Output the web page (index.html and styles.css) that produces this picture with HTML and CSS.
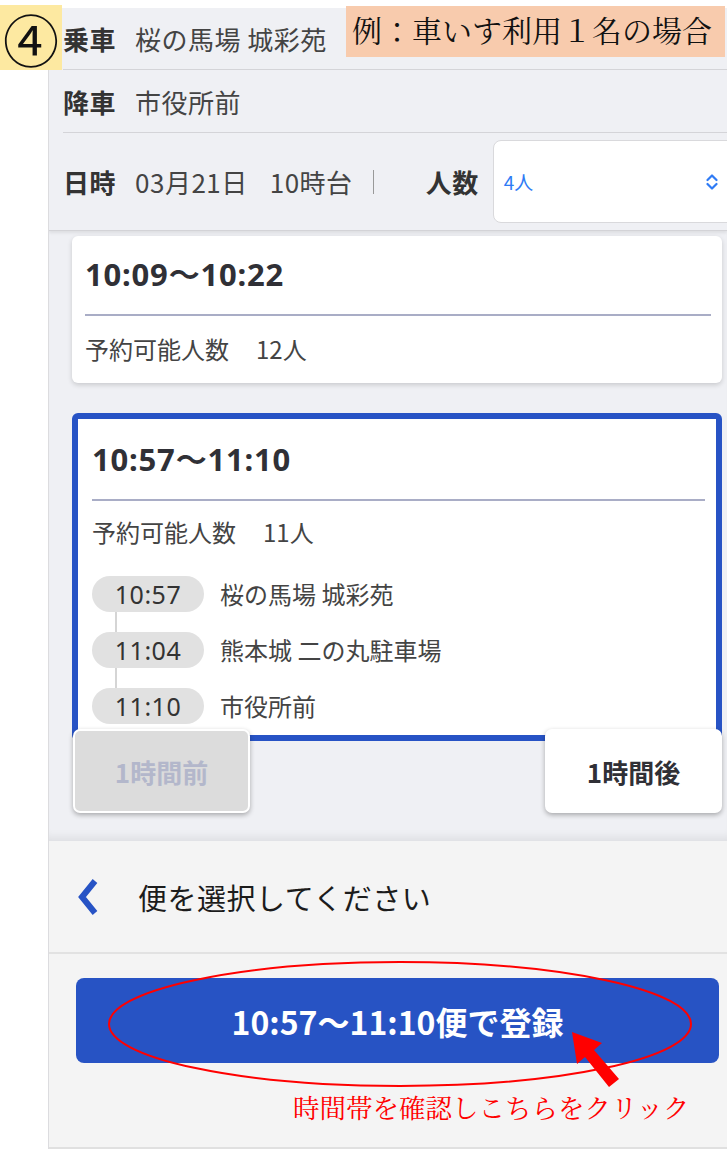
FILE: index.html
```html
<!DOCTYPE html>
<html lang="ja">
<head>
<meta charset="utf-8">
<title>便選択</title>
<link rel="stylesheet" href="styles.css">
</head>
<body>
<div class="page">
  <div class="app">
    <header class="cond">
      <div class="cond-row"><span class="cond-key">乗車</span><span class="cond-val">桜の馬場 城彩苑</span></div>
      <div class="cond-row"><span class="cond-key">降車</span><span class="cond-val">市役所前</span></div>
      <div class="cond-row cond-row-last">
        <span class="cond-key">日時</span>
        <span class="cond-val">03月21日</span>
        <span class="cond-val cond-hour">10時台</span>
        <span class="sep"></span>
        <span class="cond-key key-count">人数</span>
        <div class="select">
          <span class="select-val">4人</span>
          <svg class="select-icon" width="12" height="18" viewBox="0 0 12 18"><path d="M1.5 7 L6 2.5 L10.5 7 M1.5 11 L6 15.5 L10.5 11" fill="none" stroke="#2f7bf5" stroke-width="2.2" stroke-linecap="round" stroke-linejoin="round"/></svg>
        </div>
      </div>
    </header>

    <main class="list">
      <section class="card">
        <div class="card-head">10:09〜10:22</div>
        <div class="card-body">予約可能人数<span class="cap">12人</span></div>
      </section>

      <section class="card card-selected">
        <div class="card-head">10:57〜11:10</div>
        <div class="card-body">
          <div>予約可能人数<span class="cap">11人</span></div>
          <ul class="stops">
            <li class="stop"><span class="pill">10:57</span><span class="stop-name">桜の馬場 城彩苑</span></li>
            <li class="stop"><span class="pill">11:04</span><span class="stop-name">熊本城 二の丸駐車場</span></li>
            <li class="stop"><span class="pill">11:10</span><span class="stop-name">市役所前</span></li>
          </ul>
        </div>
      </section>

      <div class="hour-nav">
        <button class="hour-btn hour-btn-disabled">1時間前</button>
        <button class="hour-btn">1時間後</button>
      </div>
    </main>

    <nav class="titlebar">
      <svg class="back" width="26" height="40" viewBox="0 0 26 40"><path d="M20 4 L7 20 L20 36" fill="none" stroke="#2753c5" stroke-width="6" stroke-linejoin="miter"/></svg>
      <span class="title">便を選択してください</span>
    </nav>

    <footer class="submit-area">
      <button class="submit">10:57〜11:10便で登録</button>
      <p class="hint">時間帯を確認しこちらをクリック</p>
    </footer>
  </div>

  <div class="step-badge"><span class="step-num">④</span></div>
  <div class="example-label">例：車いす利用１名の場合</div>
  <svg class="annot" width="727" height="1150" viewBox="0 0 727 1150">
    <ellipse cx="400" cy="1024" rx="291" ry="62" fill="none" stroke="#ff0000" stroke-width="2"/>
    <polygon points="572,1032 602,1043 594,1050 619,1079 609,1087 585,1057 577,1064" fill="#ff0000"/>
  </svg>
</div>
</body>
</html>
```

FILE: styles.css
```css
* { box-sizing: border-box; margin: 0; padding: 0; }
html, body { background: #fff; }
body {
  font-family: "Noto Sans CJK JP", "Noto Sans", sans-serif;
  color: #333;
}
.page {
  position: relative;
  width: 727px;
  height: 1150px;
  padding: 8px 0 0 48px;
  overflow: hidden;
}
.app {
  width: 679px;
  border-left: 1px solid #dcdcdf;
  overflow: hidden;
}

/* header conditions */
.cond {
  background: #eff0f4;
  padding-left: 14px;
  border-bottom: 1px solid #d3d3d7;
  box-shadow: 0 2px 3px rgba(0,0,0,0.08);
  position: relative;
  z-index: 1;
}
.cond-row {
  display: flex;
  align-items: center;
  height: 62px;
  border-bottom: 1px solid #d4d4d8;
  font-size: 26px;
  letter-spacing: 0.5px;
}
.cond-row + .cond-row { height: 63px; }
.cond-row.cond-row-last { height: 97px; border-bottom: 0; }
.cond-key { font-weight: 700; color: #333; }
.cond-val { margin-left: 19px; color: #444; }
.cond-hour { margin-left: 22px; }
.sep {
  width: 1px;
  height: 24px;
  background: #999;
  margin-left: 20px;
}
.key-count { margin-left: 52px; }
.select {
  flex: 1;
  margin-left: 14px;
  margin-right: -12px;
  height: 83px;
  background: #fff;
  border: 1px solid #d9d9dc;
  border-radius: 8px;
  display: flex;
  align-items: center;
  justify-content: space-between;
  padding: 0 20px 0 10px;
  letter-spacing: 0;
}
.select-val { font-size: 19px; color: #2f7bf5; }

/* list */
.list {
  background: #eff0f4;
  padding: 5px 5px 28px 23px;
  box-shadow: inset 0 -10px 8px -6px rgba(0,0,0,0.07);
}
.card {
  background: #fff;
  border-radius: 6px;
  box-shadow: 0 2px 5px rgba(0,0,0,0.16);
  padding: 0 11px 0 13px;
}
.card + .card { margin-top: 30px; }
.card-head {
  font-family: "Noto Sans", "Noto Sans CJK JP", sans-serif;
  font-weight: 700;
  font-size: 31px;
  line-height: 30px;
  letter-spacing: 0.8px;
  color: #303036;
  padding: 23px 0 25px;
  border-bottom: 2px solid #a9adc6;
}
.card-body {
  font-size: 24px;
  line-height: 30px;
  color: #444;
  padding: 18px 0 19px;
}
.cap { margin-left: 27px; }
.card-selected {
  border: 6px solid #2753c5;
  padding: 0 11px 0 14px;
  box-shadow: none;
}
.card-selected .card-head { padding-top: 25px; }
.card-selected .card-body { padding: 16px 0 11px; }

.stops {
  list-style: none;
  margin-top: 29px;
  display: flex;
  flex-direction: column;
  gap: 20px;
}
.stop {
  display: flex;
  align-items: center;
  gap: 16px;
  position: relative;
}
.stop + .stop::before {
  content: "";
  position: absolute;
  left: 23px;
  top: -20px;
  width: 2px;
  height: 20px;
  background: #d5d5d5;
}
.pill {
  width: 112px;
  height: 36px;
  border-radius: 18px;
  background: #e1e1e1;
  display: flex;
  align-items: center;
  justify-content: center;
  font-family: "Noto Sans", sans-serif;
  font-size: 25px;
  letter-spacing: 0.5px;
  color: #333;
}
.stop-name { font-size: 24px; color: #444; }

.hour-nav {
  display: flex;
  justify-content: space-between;
  margin-top: -12px;
  position: relative;
  z-index: 1;
}
.hour-btn {
  width: 177px;
  height: 84px;
  border-radius: 7px;
  background: #fff;
  border: 2px solid #fff;
  box-shadow: 0 2px 5px rgba(0,0,0,0.3);
  font-family: "Noto Sans CJK JP", sans-serif;
  font-weight: 700;
  font-size: 26px;
  color: #303036;
}
.hour-btn-disabled {
  background: #dcdcdc;
  color: #b3b7cb;
  margin-left: 1px;
}

/* title bar */
.titlebar {
  height: 113px;
  background: #f4f4f4;
  border-bottom: 2px solid #e2e2e2;
  display: flex;
  align-items: center;
  padding-left: 26px;
  gap: 37px;
}
.title { font-size: 29px; color: #1c1c1c; letter-spacing: 0.5px; }

/* submit */
.submit-area {
  height: 195px;
  background: #f4f4f4;
  border-bottom: 2px solid #e0e0e0;
  padding: 24px 8px 0 27px;
}
.submit {
  display: block;
  width: 100%;
  height: 85px;
  border: 0;
  border-radius: 8px;
  background: #2753c4;
  color: #fff;
  font-family: "Noto Sans CJK JP", sans-serif;
  font-weight: 700;
  font-size: 32px;
}
.hint {
  margin-top: 31px;
  padding-left: 217px;
  font-family: "Liberation Serif", "Noto Serif CJK JP", "Noto Sans CJK JP", serif;
  font-size: 26.5px;
  line-height: 30px;
  color: #f00;
  white-space: nowrap;
}

/* annotations */
.step-badge {
  position: absolute;
  z-index: 5;
  left: 0;
  top: 5px;
  width: 62px;
  height: 65px;
  background: #fde9a1;
  display: flex;
  align-items: center;
  justify-content: center;
}
.step-num {
  font-size: 56px;
  line-height: 60px;
  color: #111;
  font-weight: 400;
}
.example-label {
  position: absolute;
  z-index: 5;
  left: 346px;
  top: 6px;
  width: 379px;
  height: 51px;
  background: #f8cbad;
  padding-left: 6px;
  font-family: "Liberation Serif", "Noto Serif CJK JP", "Noto Sans CJK JP", serif;
  font-size: 30px;
  line-height: 51px;
  color: #111;
  white-space: nowrap;
  overflow: hidden;
}
.annot {
  position: absolute;
  z-index: 5;
  left: 0;
  top: 0;
  pointer-events: none;
}
```
